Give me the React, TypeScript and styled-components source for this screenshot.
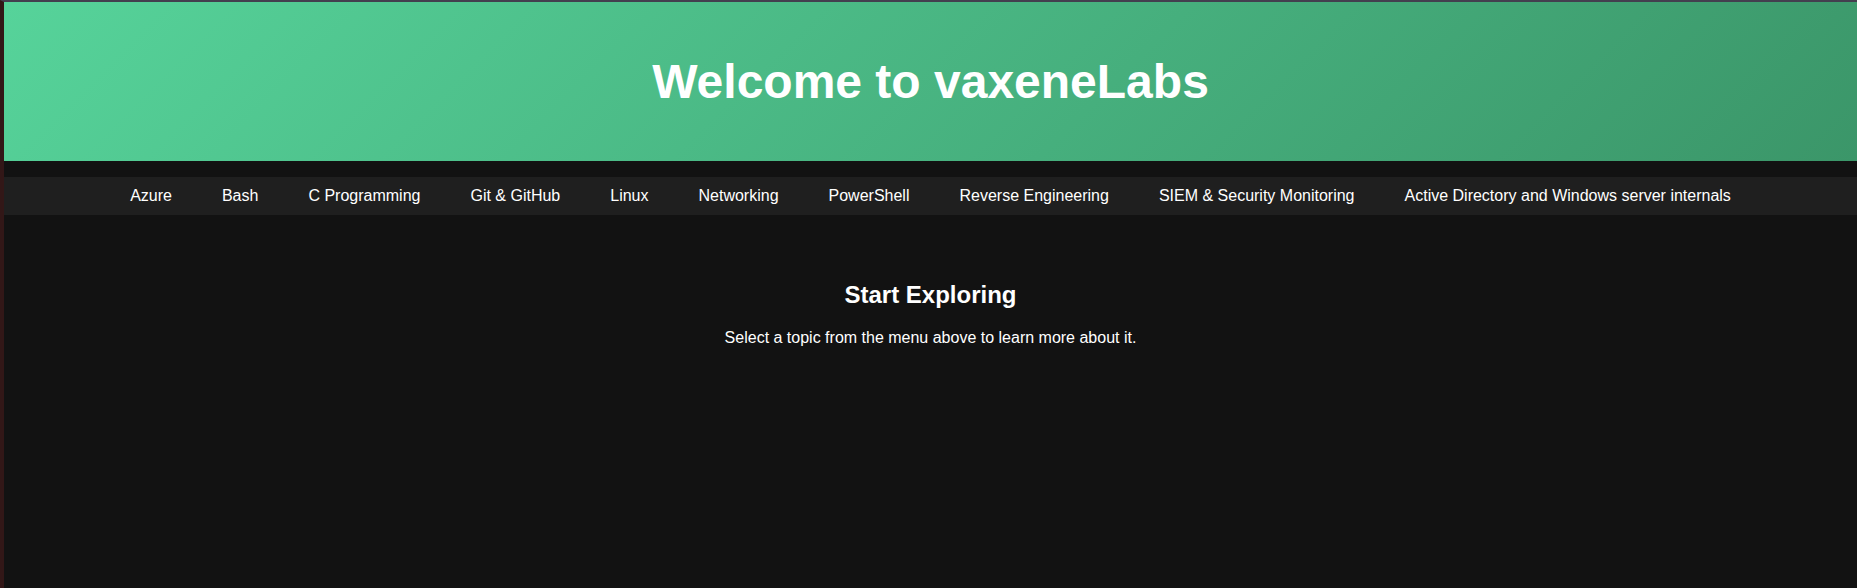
import React from "react";
import styled, { createGlobalStyle } from "styled-components";

const GlobalStyle = createGlobalStyle`
  * { box-sizing: border-box; }
  body {
    margin: 0;
    background: #121212;
    color: #fff;
    font-family: Arial, "Liberation Sans", sans-serif;
    font-size: 16px;
  }
`;

const Page = styled.div`
  min-height: 100vh;
  border-top: 2px solid #433f4f;
  border-left: 4px solid #321717;
`;

const Header = styled.header`
  padding: 48px 20px;
  text-align: center;
  background: linear-gradient(135deg, #56d39a, #3b9669);
`;

const Title = styled.h1`
  margin: 0;
  font-size: 48px;
  line-height: 63px;
`;

const Nav = styled.nav`
  margin-top: 16px;
  background: #1f1f1f;
`;

const Topics = styled.ul`
  display: flex;
  flex-wrap: wrap;
  justify-content: center;
  gap: 0 50px;
  margin: 0;
  padding: 10px 0;
  list-style: none;
`;

const TopicLink = styled.a`
  color: #fff;
  line-height: 18px;
  text-decoration: none;
`;

const Main = styled.main`
  padding: 66px 20px;
  text-align: center;
`;

const Subtitle = styled.h2`
  margin: 0 0 20px;
  font-size: 24px;
  line-height: 28px;
`;

const Text = styled.p`
  margin: 0;
  line-height: 18px;
`;

const topics = [
  "Azure",
  "Bash",
  "C Programming",
  "Git & GitHub",
  "Linux",
  "Networking",
  "PowerShell",
  "Reverse Engineering",
  "SIEM & Security Monitoring",
  "Active Directory and Windows server internals",
];

export default function App() {
  return (
    <Page>
      <GlobalStyle />
      <Header>
        <Title>Welcome to vaxeneLabs</Title>
      </Header>
      <Nav>
        <Topics>
          {topics.map((topic) => (
            <li key={topic}>
              <TopicLink href="#">{topic}</TopicLink>
            </li>
          ))}
        </Topics>
      </Nav>
      <Main>
        <Subtitle>Start Exploring</Subtitle>
        <Text>Select a topic from the menu above to learn more about it.</Text>
      </Main>
    </Page>
  );
}
